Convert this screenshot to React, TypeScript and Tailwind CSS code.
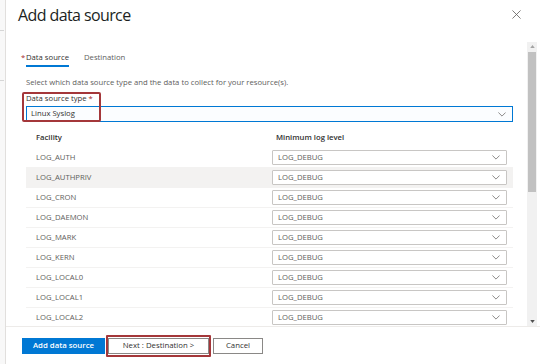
import React from "react";

const facilities = [
  "LOG_AUTH",
  "LOG_AUTHPRIV",
  "LOG_CRON",
  "LOG_DAEMON",
  "LOG_MARK",
  "LOG_KERN",
  "LOG_LOCAL0",
  "LOG_LOCAL1",
  "LOG_LOCAL2",
];

function Chevron({ className = "" }: { className?: string }) {
  return (
    <svg viewBox="0 0 10 6" className={className} fill="none" stroke="#605e5c" strokeWidth="0.9">
      <path d="M0.5 0.5 L5 5 L9.5 0.5" />
    </svg>
  );
}

export default function App() {
  return (
    <div
      className="w-[540px] h-[364px] bg-white flex overflow-hidden text-[#323130]"
      style={{ fontFamily: '"Open Sans", "Noto Sans", sans-serif' }}
    >
      {/* page behind the panel */}
      <div className="w-[6px] bg-[#f8f8f8] border-r border-[#e1dfdd] flex flex-col">
        <div className="h-[30px]" />
        <div className="h-px bg-[#d6d6d6] w-[4px]" />
        <div className="h-[49px]" />
        <div className="h-px bg-[#d6d6d6] w-[4px]" />
      </div>

      <div className="flex-1 flex flex-col min-w-0">
        {/* header */}
        <div className="h-[42px] flex items-start justify-between pl-[12px] pr-[19px] shrink-0">
          <div className="text-[16px] tracking-[-0.6px] leading-[22px] mt-[4px] text-[#201f1e]">Add data source</div>
          <svg viewBox="0 0 10 10" className="w-[9px] h-[9px] mt-[10px]" stroke="#605e5c" strokeWidth="0.9">
            <path d="M0.5 0.5 L9.5 9.5 M9.5 0.5 L0.5 9.5" />
          </svg>
        </div>

        {/* body */}
        <div className="flex-1 flex min-h-0">
          <div className="flex-1 overflow-hidden pl-[20px] pr-[14px] relative text-[7.7px]">
            {/* tabs */}
            <div className="flex gap-[15px] pt-[10px]">
              <div className="flex flex-col">
                <div className="leading-[11px] relative text-[#323130]">
                  <span className="absolute left-[-5px] top-0 text-[#a4262c]">*</span>
                  Data source
                </div>
                <div className="h-[2px] bg-[#0078d4] mt-[2px]" />
              </div>
              <div className="leading-[11px] text-[#605e5c]">Destination</div>
            </div>

            <div className="mt-[10px] leading-[10px] text-[#605e5c]">
              Select which data source type and the data to collect for your resource(s).
            </div>

            <div className="mt-[6px] leading-[10px] text-[#323130]">
              Data source type <span className="text-[#a4262c]">*</span>
            </div>
            <div className="mt-[3px] h-[16px] border border-[#0078d4] bg-[#fbfdff] flex items-center justify-between pl-[4px] pr-[6px]">
              <span className="leading-none">Linux Syslog</span>
              <Chevron className="w-[8px] h-[5px]" />
            </div>

            {/* red annotation around data source type */}
            <div className="absolute left-[16px] top-[50px] w-[79px] h-[30px] border-2 border-[#a4373a] rounded-[2px]" />

            {/* table */}
            <div className="mt-[6px]">
              <div className="h-[20px] flex items-center font-semibold text-[#323130]">
                <div className="w-[246px] pl-[10px]">Facility</div>
                <div className="pl-[4px]">Minimum log level</div>
              </div>
              {facilities.map((f) => (
                <div
                  key={f}
                  className={`h-[20px] flex items-center border-b border-[#f3f2f1] ${
                    f === "LOG_AUTHPRIV" ? "bg-[#f3f2f1]" : ""
                  }`}
                >
                  <div className="w-[246px] pl-[10px] text-[#605e5c]">{f}</div>
                  <div className="w-[235px] h-[15px] border border-[#c8c6c4] rounded-[1px] bg-white flex items-center justify-between pl-[5px] pr-[6px] text-[#605e5c]">
                    <span className="leading-none">LOG_DEBUG</span>
                    <Chevron className="w-[8px] h-[5px]" />
                  </div>
                </div>
              ))}
            </div>
          </div>

          {/* scrollbar */}
          <div className="w-[10px] mr-[3px] bg-[#f1f1f1] flex flex-col items-center">
            <svg viewBox="0 0 6 4" className="w-[5px] h-[3px] mt-[3px]" fill="#a3a3a3">
              <path d="M0 4 L3 0 L6 4 Z" />
            </svg>
            <div className="w-[8px] h-[140px] bg-[#c1c1c1] mt-[4px]" />
            <div className="flex-1" />
            <svg viewBox="0 0 6 4" className="w-[5px] h-[3px] mb-[3px]" fill="#505050">
              <path d="M0 0 L6 0 L3 4 Z" />
            </svg>
          </div>
        </div>

        {/* footer */}
        <div className="h-[38px] shrink-0 border-t border-[#edebe9] flex items-center pl-[16px] gap-[1px] text-[7.8px] leading-none">
          <button className="w-[83px] h-[16px] bg-[#0078d4] text-white font-semibold flex items-center justify-center leading-none">
            Add data source
          </button>
          <div className="relative ml-[2px]">
            <button className="w-[101px] h-[16px] bg-white border border-[#8a8886] text-[#323130] flex items-center justify-center leading-none">
              Next : Destination &gt;
            </button>
            <div className="absolute left-[-2px] right-[-2px] top-[-3px] bottom-[-3px] border-2 border-[#a4373a] rounded-[1px]" />
          </div>
          <button className="ml-[3px] w-[50px] h-[16px] bg-white border border-[#8a8886] text-[#323130] flex items-center justify-center leading-none">
            Cancel
          </button>
        </div>
      </div>
    </div>
  );
}
